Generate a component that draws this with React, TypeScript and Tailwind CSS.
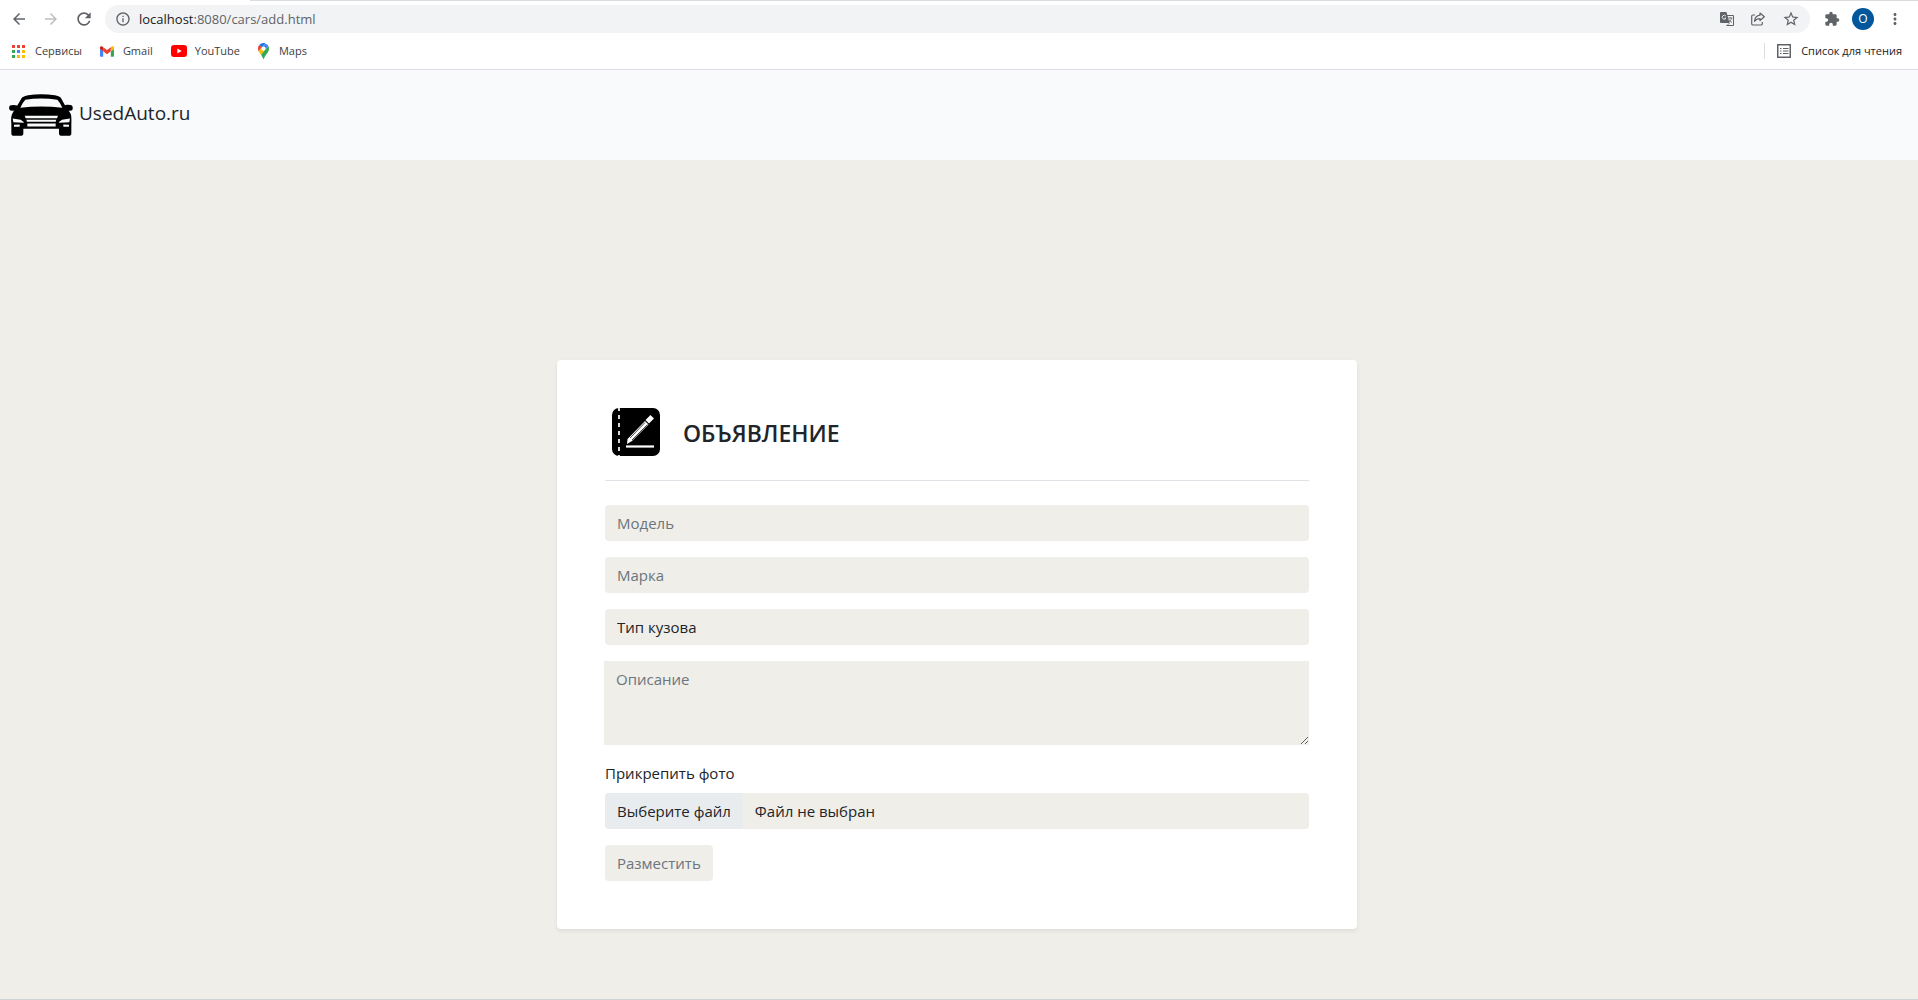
import { MdArrowBack, MdArrowForward, MdRefresh, MdInfoOutline, MdStarOutline, MdExtension, MdMoreVert } from "react-icons/md";

const uiFont = "font-['Open_Sans','Noto_Sans',sans-serif]";

function AppsIcon() {
  const colors = ["#ea4335", "#ea4335", "#ea4335", "#34a853", "#4285f4", "#fbbc04", "#34a853", "#fbbc04", "#fbbc04"];
  return (
    <svg viewBox="0 0 13 13" className="h-[13px] w-[13px]" shapeRendering="crispEdges" aria-hidden="true">
      {colors.map((fill, i) => (
        <rect key={i} x={(i % 3) * 5} y={Math.floor(i / 3) * 5} width="3" height="3" fill={fill} />
      ))}
    </svg>
  );
}

function GmailIcon() {
  return (
    <svg viewBox="52 42 88 66" className="h-[11px] w-[14px]" aria-hidden="true">
      <path fill="#4285f4" d="M58 108h14V74L52 59v43c0 3.32 2.69 6 6 6" />
      <path fill="#34a853" d="M120 108h14c3.32 0 6-2.69 6-6V59l-20 15" />
      <path fill="#fbbc04" d="M120 48v26l20-15v-8c0-7.42-8.47-11.65-14.4-7.2" />
      <path fill="#ea4335" d="M72 74V48l24 18 24-18v26L96 92" />
      <path fill="#c5221f" d="M52 51v8l20 15V48l-5.600-4.200C60.500 39.350 52 43.580 52 51" />
    </svg>
  );
}

function YouTubeIcon() {
  return (
    <svg viewBox="0 0 16 12" className="h-3 w-4" aria-hidden="true">
      <rect width="16" height="12" rx="3" fill="#ff0000" />
      <path d="M6.300 3.400 L10.700 6 L6.300 8.600 Z" fill="#fff" />
    </svg>
  );
}

function MapsIcon() {
  return (
    <svg viewBox="0 0 92.300 132.300" className="h-4 w-[11px]" aria-hidden="true">
      <path fill="#1a73e8" d="M60.200 2.200C55.800.8 51 0 46.100 0 32 0 19.300 6.400 10.800 16.500l21.800 18.300L60.200 2.200z" />
      <path fill="#ea4335" d="M10.800 16.500C4.100 24.500 0 34.900 0 46.100c0 8.700 1.700 15.700 4.600 22l28-33.300-21.800-18.300z" />
      <path fill="#4285f4" d="M46.200 28.500c9.800 0 17.700 7.900 17.700 17.700 0 4.300-1.600 8.300-4.200 11.400 0 0 13.900-16.600 27.500-32.700-5.600-10.800-15.300-19-27-22.700L32.600 34.800c3.300-3.800 8.100-6.300 13.600-6.300" />
      <path fill="#fbbc04" d="M46.200 63.800c-9.800 0-17.700-7.900-17.700-17.700 0-4.300 1.500-8.300 4.100-11.300l-28 33.300c4.800 10.600 12.800 19.200 21 29.900l34.100-40.500c-3.300 3.900-8.100 6.300-13.500 6.300" />
      <path fill="#34a853" d="M59.100 109.200c15.400-24.100 33.300-35 33.300-63 0-7.700-1.900-14.900-5.200-21.300L25.600 98c2.600 3.400 5.300 7.300 7.900 11.300 9.400 14.500 6.800 23.100 12.800 23.100s3.400-8.700 12.800-23.200" />
    </svg>
  );
}

function TranslateIcon() {
  return (
    <svg viewBox="0 0 14 14" className="size-[14px]" aria-hidden="true">
      <path d="M6 3.500H13.500V13.500H6.500" fill="none" stroke="#5f6368" />
      <path d="M1 0H6.500L9.500 11H1Q0 11 0 10V1Q0 0 1 0Z" fill="#5f6368" />
      <path d="M5.900 4.100A2 2 0 1 0 6 6.200H4.300" fill="none" stroke="#f1f3f4" strokeWidth="0.900" />
      <path d="M8 6H12.500M10.200 5V6M11.700 6Q11 8.500 8.800 10.300M9 7.500Q10 9.500 12 10.500M7 13.500L9.500 11" fill="none" stroke="#5f6368" strokeWidth="0.800" />
    </svg>
  );
}

function ShareIcon() {
  return (
    <svg viewBox="0 0 14 14" className="size-[14px]" fill="none" stroke="#5f6368" strokeWidth="1.200" strokeLinejoin="round" aria-hidden="true">
      <path d="M4 3H2Q0.700 3 0.700 4.300V11.700Q0.700 13 2 13H10Q11.300 13 11.300 11.700V10" />
      <path d="M9 1L13.300 4.800L9 8.500V6.600Q5.500 6.600 3.500 9.300Q4 3.800 9 3.200Z" />
    </svg>
  );
}

function ReadingListIcon() {
  return (
    <svg viewBox="0 0 14 14" className="size-[14px]" fill="none" stroke="#5f6368" aria-hidden="true">
      <rect x="0.750" y="0.750" width="12.500" height="12.500" strokeWidth="1.500" />
      <path d="M3 4.500H4.500M6 4.500H11.500M3 7H4.500M6 7H11.500M3 9.500H4.500M6 9.500H11.500" strokeWidth="1.200" />
    </svg>
  );
}

function CarLogo() {
  return (
    <svg viewBox="27 42 192 125" className="h-[42px] w-16" aria-hidden="true">
      <path d="M66 52 Q72 47 84 45 Q123 40 165 45 Q178 47 182 52 L195 75 L200 74 Q209 73 216 76 Q219 80 218 87 Q217 92 208 92 L206 91 L213 103 Q215 115 214 130 V160 Q214 167 206 167 H186 Q177 167 177 159 V146 H70 V159 Q70 167 61 167 H42 Q34 167 34 159 V130 Q32 112 36 102 L42 91 L38 92 Q29 92 28 87 Q26 80 30 76 Q38 73 46 75 L52 76 Z" />
      <path fill="#f8fafc" d="M76 59 Q123 51 172 59 Q181 68 187 83 Q123 75 61 83 Q67 68 76 59 Z" />
      <path fill="#f8fafc" d="M74 107 H174 L171 114 H77 Z M79 119 H169 L167 125 H81 Z M82 130 H167 V139 H82 Z" />
      <path fill="#f8fafc" d="M38 115 L62 119 L72 126 L70 128 L40 126 Z M210 115 L186 119 L176 126 L178 128 L208 126 Z" />
      <path fill="#f8fafc" d="M42 134 L59 133 V140 H42 Z M207 134 L190 133 V140 H207 Z" />
    </svg>
  );
}

function NotebookIcon() {
  return (
    <svg viewBox="0 0 48 48" className="h-12 w-12" aria-hidden="true">
      <rect width="48" height="48" rx="7" />
      <path d="M7 0V48" stroke="#fff" strokeWidth="1.700" strokeDasharray="4 4" strokeDashoffset="1" />
      <path d="M14 38.500H42" stroke="#fff" strokeWidth="2.200" />
      <path fill="#fff" d="M38.500 7 L42 10.500 L37 15.500 L33.500 12 Z M33 13 L36.500 16.500 L20 33 L15 36 L15.500 31 Z" />
      <path d="M33 14.500 L18 30 M35.500 16.500 L20 32" stroke="#000" strokeWidth="0.700" />
    </svg>
  );
}

function Browser() {
  return (
    <div className="border-b border-[#dadce0] bg-white text-[#5f6368]">
      <div className="ml-[250px] h-px bg-[#dadce0]" />
      <div className="flex h-9 items-center pr-3.5 pl-[10px]">
        <div className="flex items-center gap-3.5">
          <button aria-label="Назад"><MdArrowBack className="size-[18px]" /></button>
          <button aria-label="Вперёд" className="text-[#bdbfc1]"><MdArrowForward className="size-[18px]" /></button>
          <button aria-label="Обновить"><MdRefresh className="size-5" /></button>
        </div>
        <div className="ml-[11px] flex h-7 flex-1 items-center rounded-full bg-[#f1f3f4] pr-2.5 pl-2.5">
          <MdInfoOutline className="size-4" />
          <div className="ml-2 flex-1 text-[13px] leading-5">
            <span className="text-[#202124]">localhost</span>:8080/cars/add.html
          </div>
          <div className="flex items-center gap-[17px]">
            <button aria-label="Перевести"><TranslateIcon /></button>
            <button aria-label="Поделиться"><ShareIcon /></button>
            <button aria-label="В закладки"><MdStarOutline className="size-[18px]" /></button>
          </div>
        </div>
        <div className="ml-3.5 flex items-center">
          <button aria-label="Расширения"><MdExtension className="size-4" /></button>
          <button className="ml-3 size-[22px] rounded-full bg-[#01579b] text-xs leading-[22px] text-white">O</button>
          <button aria-label="Меню" className="ml-3"><MdMoreVert className="size-[18px]" /></button>
        </div>
      </div>
      <nav className="flex h-8 items-center pr-4 pb-1 pl-3 text-[11px] leading-4 text-[#3c4043]">
        <a href="#" className="flex items-center gap-2.5"><AppsIcon />Сервисы</a>
        <a href="#" className="ml-[18px] flex items-center gap-[9px]"><GmailIcon />Gmail</a>
        <a href="#" className="ml-[18px] flex items-center gap-2"><YouTubeIcon />YouTube</a>
        <a href="#" className="ml-[18px] flex items-center gap-2.5"><MapsIcon />Maps</a>
        <button className="ml-auto flex items-center gap-2.5 border-l border-[#dadce0] pl-3 text-[#202124]">
          <ReadingListIcon />Список для чтения
        </button>
      </nav>
    </div>
  );
}

const field = "h-9 w-full rounded bg-[#efeee9] px-3 placeholder:text-[#6c757d] outline-none";

function AdForm() {
  return (
    <form className="w-[800px] max-w-full rounded bg-white p-12 shadow-[0_2px_4px_rgba(0,0,0,0.075)]">
      <div className="mb-6 flex items-center border-b border-[#dee2e6] pb-6 pl-[7px]">
        <NotebookIcon />
        <h1 className="ml-[23px] pt-0.5 text-[23px] leading-7 font-semibold">ОБЪЯВЛЕНИЕ</h1>
      </div>
      <div className="flex flex-col gap-4 text-[15px] leading-6">
        <input className={field} placeholder="Модель" aria-label="Модель" />
        <input className={field} placeholder="Марка" aria-label="Марка" />
        <select className={`${field} appearance-none`} aria-label="Тип кузова"><option>Тип кузова</option></select>
        <textarea
          className="-ml-px h-[84px] resize-y bg-[#efeee9] px-3 py-1.5 outline-none placeholder:text-[#6c757d]"
          placeholder="Описание"
          aria-label="Описание"
        />
        <div>
          <label htmlFor="photo" className="mb-2 block">Прикрепить фото</label>
          <label className="flex h-9 items-center overflow-hidden rounded bg-[#efeee9]">
            <input id="photo" type="file" className="sr-only" />
            <span className="bg-[#e9ecef] px-3 py-1.5">Выберите файл</span>
            <span className="px-3">Файл не выбран</span>
          </label>
        </div>
        <button type="button" className="h-9 self-start rounded bg-[#efeee9] px-3 text-[#6c757d]">Разместить</button>
      </div>
    </form>
  );
}

export default function App() {
  return (
    <div className={`flex min-h-screen flex-col border-b border-[#ced4d4] bg-[#efeee9] text-[#212529] ${uiFont}`}>
      <Browser />
      <header className="flex h-[90px] items-center bg-[#f8fafc] px-[9px]">
        <a href="#" className="flex items-center gap-1.5 text-[19px] leading-[30px]">
          <CarLogo />
          <span className="pb-1">UsedAuto.ru</span>
        </a>
      </header>
      <main className="flex flex-1 items-start justify-center pt-[200px] pr-1">
        <AdForm />
      </main>
    </div>
  );
}
